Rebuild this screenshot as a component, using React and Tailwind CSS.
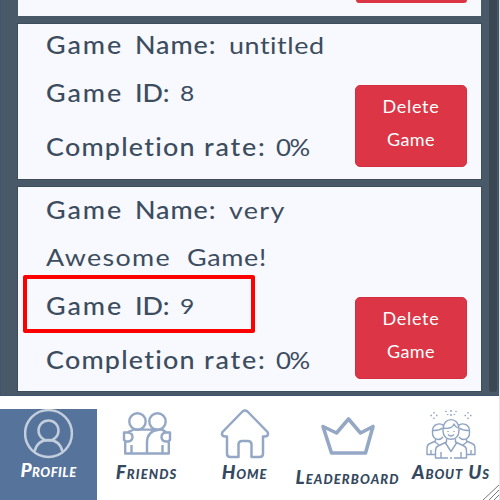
import React from "react";

function Word({ className, children }) {
  return (
    <span className={"shrink-0 whitespace-nowrap " + className}>
      <span className="inline-block origin-left scale-x-[1.12]">{children}</span>
    </span>
  );
}

const line = "flex h-12 items-center leading-[48px]";

function DeleteButton() {
  return (
    <button className="h-[82px] w-[112px] shrink-0 rounded-[5px] border border-[#d32f40] bg-[#dc3545] pb-[6px] text-center text-[18px] leading-[33px] text-white">
      <span className="block tracking-[0.7px]">Delete</span>
      <span className="block tracking-[0.4px]">Game</span>
    </button>
  );
}

function GameId({ id }) {
  return (
    <div className={line}>
      <Word className="w-[89px] font-medium tracking-[1.7px]">Game</Word>
      <Word className="w-[45px] font-medium tracking-[-0.2px]">ID:</Word>
      <Word className="w-[20px] text-[22px]">{id}</Word>
    </div>
  );
}

function Completion() {
  return (
    <div className={line + " mt-[6px]"}>
      <Word className="w-[158px] font-medium tracking-[1.1px]">Completion</Word>
      <Word className="w-[72px] font-medium tracking-[1.6px]">rate:</Word>
      <Word className="w-[40px] text-[23px] tracking-[-1.2px]">0%</Word>
    </div>
  );
}

function NameLabel() {
  return (
    <>
      <Word className="w-[89px] font-medium tracking-[1.7px]">Game</Word>
      <Word className="w-[94px] font-medium tracking-[0.8px]">Name:</Word>
    </>
  );
}

function ProfileIcon() {
  return (
    <svg width="50" height="50" viewBox="0 0 50 50" fill="none" stroke="#c3cedd" strokeWidth="2.5">
      <circle cx="24.500" cy="24.500" r="23.4" />
      <circle cx="24.500" cy="21.500" r="10" />
      <path d="M10.500 42.500C12.500 34.500 17.500 31 24.500 31S36.500 34.500 38.500 42.500" />
    </svg>
  );
}

function FriendsIcon() {
  return (
    <svg width="50" height="43" viewBox="0 0 50 43" fill="none" stroke="#94a8c5" strokeWidth="2.4" strokeLinejoin="round">
      <circle cx="15.5" cy="9.5" r="8.2" />
      <circle cx="35.5" cy="9.5" r="8.2" />
      <path d="M11 18L6 20M11 17.6H40L44 20M2 20.5H6C12 21 12 29 6 29.5H4L2 28ZM48 20.5H44C38 21 38 29 44 29.5H46L48 28ZM3.2 29V41.5H46.8V29M25 41V30C25 23 30 18 36 18M9.5 33V41M40.5 33V41" />
    </svg>
  );
}

function HomeIcon() {
  return (
    <svg width="50" height="50" viewBox="0 0 50 50" fill="none" stroke="#94a8c5" strokeWidth="2.5" strokeLinejoin="round">
      <path d="M22.500 2.500Q25 .5 27.500 2.500L47.500 23Q49.500 27.500 44 27.500H43V45Q43 48 39.500 48H31.500V35Q31 32 28 32H22Q19 32 18.500 35V48H10.500Q7 48 7 45V27.500H6Q.5 27.500 2.500 23Z" />
    </svg>
  );
}

function CrownIcon() {
  return (
    <svg width="56" height="40" viewBox="0 0 56 40" fill="none" stroke="#94a8c5" strokeWidth="3.6" strokeLinejoin="round">
      <path d="M3 10.5L16.5 17L28.5 3L40.5 17L53 10.5L45.5 37H11.5Z" />
    </svg>
  );
}

function AboutIcon() {
  return (
    <svg width="50" height="50" viewBox="0 0 50 50" fill="none" stroke="#8fa4c2" strokeWidth="1.4" strokeLinejoin="round">
      <path d="M25 1V3M25 5V7M19.500 2L20.500 3M21.500 5L22 6M30.500 2L29.500 3M28.500 5L28 6M8 3V4.500M8 8.500V10M4.500 6.500H6M10 6.500H11.500M42 3V4.500M42 8.500V10M38.500 6.500H40M44 6.500H45.500" />
      <path d="M18 17C14 13 6.500 15 6.500 22V24C6.500 28 9 30 12 30.500Q15 30.500 17 28M32 17C36 13 43.500 15 43.500 22V24C43.500 28 41 30 38 30.500Q35 30.500 33 28" />
      <path d="M6.500 21.500Q13 22 16.500 19M43.500 21.500Q37 22 33.500 19M9.500 30V32L3 35Q1 36 1 40V45.500H9M40.500 30V32L47 35Q49 36 49 40V45.500H41M5 41V45M45 41V45M9 33L13 36M41 33L37 36" />
      <path d="M17 20C17 7.500 33 7.500 33 20V22C33 33 17 33 17 22ZM17 19C23 20 27 18 28 15C29 17 31 19 33 19M22 22V23M28 22V23M22 25.500C24 27.500 26 27.500 28 25.500" />
      <path d="M20.500 30V33L12 37Q9.500 38 9.500 42V49H22M29.500 30V33L38 37Q40.500 38 40.500 42V49H28M19.500 34L25 42.500L30.500 34M15 43V49M35 43V49M24 49H26" />
    </svg>
  );
}

function Tab({ className, labelClass, icon, children }) {
  return (
    <div className={"flex h-[91px] shrink-0 flex-col items-center " + className}>
      {icon}
      <span className={"whitespace-nowrap font-black italic leading-5 [font-variant:small-caps] " + labelClass}>{children}</span>
    </div>
  );
}

export default function App() {
  return (
    <div className="relative h-[500px] w-[500px] overflow-hidden bg-white font-['Lato',sans-serif] text-[#3c4d5e]">
      <div className="flex h-[396px] w-[499px] border-b border-l border-r border-[#405570] bg-[#4a5967] pl-[17px]">
        <div className="flex w-[463px] flex-col gap-[8px] text-[24px]">
          <div className="flex h-4 items-start justify-end bg-[#f8f8ff] pr-[14px]">
            <div className="h-[3px] w-[111px] rounded-b-[4px] bg-[#dc3545]" />
          </div>
          <div className="flex h-[155px] justify-between bg-[#f8f8ff] pl-[28px] pr-[14px] outline-1 outline-[#3d4d5c]">
            <div className="-mt-[3px]">
              <div className={line}>
                <NameLabel />
                <Word className="w-[95px] tracking-[0.5px]">untitled</Word>
              </div>
              <GameId id="8" />
              <Completion />
            </div>
            <div className="-ml-10 mt-[61px]"><DeleteButton /></div>
          </div>
          <div className="flex h-[204px] justify-between bg-[#f8f8ff] pl-[28px] pr-[14px] outline-1 outline-[#3d4d5c]">
            <div className="-mt-px">
              <div className={line}>
                <NameLabel />
                <Word className="w-[60px] tracking-[1.2px]">very</Word>
              </div>
              <div className={line + " -mt-px mb-px"}>
                <Word className="w-[141px] tracking-[1.2px]">Awesome</Word>
                <Word className="w-[80px] tracking-[0.6px]">Game!</Word>
              </div>
              <GameId id="9" />
              <Completion />
            </div>
            <div className="-ml-10 mt-[110px]"><DeleteButton /></div>
          </div>
        </div>
        <div className="ml-[8px] h-[392px] w-[8px] rounded-b-[3px] bg-[#3b4753]" />
      </div>

      <div className="flex pt-[13px] text-[19px] text-[#34495e]">
        <Tab className="w-[97px] bg-[#56739b] text-white" labelClass="mt-[1px] tracking-[0.5px]" icon={<ProfileIcon />}>Profile</Tab>
        <Tab className="w-[99px] pt-[3px]" labelClass="mt-[7px] tracking-[1.1px]" icon={<FriendsIcon />}>Friends</Tab>
        <Tab className="w-[97px]" labelClass="mt-[3px] tracking-[0.9px]" icon={<HomeIcon />}>Home</Tab>
        <Tab className="w-[109px] pt-[7px]" labelClass="mt-[11px] tracking-[1.1px]" icon={<CrownIcon />}>Leaderboard</Tab>
        <Tab className="w-[98px]" labelClass="mt-[3px] tracking-[0.9px]" icon={<AboutIcon />}>About Us</Tab>
      </div>

      <div className="absolute left-[23px] top-[275px] h-[58px] w-[232px] rounded-[2px] border-4 border-[#ff0000]" />
      <div className="absolute right-0 top-0 h-[500px] w-px bg-[#e3e6ea]" />
      <svg className="absolute bottom-0 right-0" width="18" height="16" fill="none" stroke="#777" strokeWidth="1">
        <path d="M1 16L17 1M7 16L17 6M12 16L17 11" />
      </svg>
    </div>
  );
}
